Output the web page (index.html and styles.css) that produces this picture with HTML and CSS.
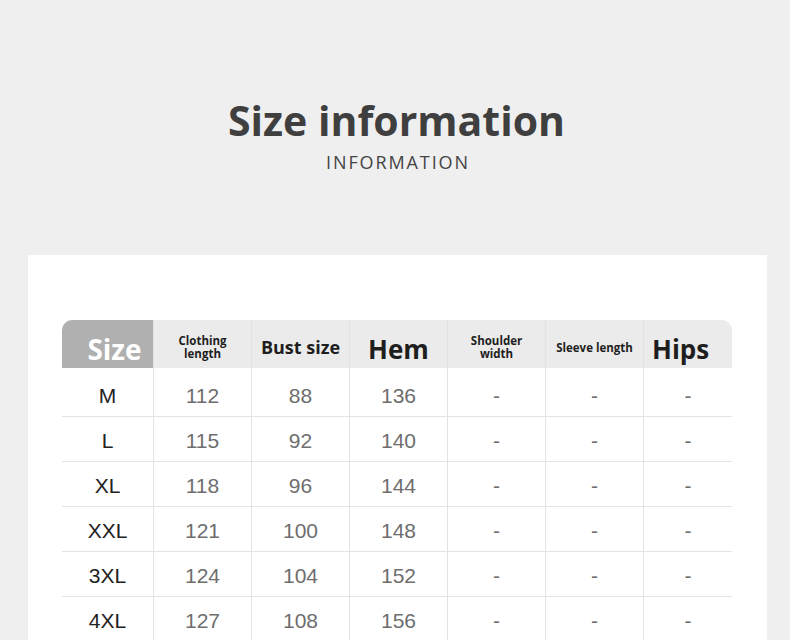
FILE: index.html
```html
<!DOCTYPE html>
<html>
<head>
<meta charset="utf-8">
<link rel="stylesheet" href="styles.css">
</head>
<body>
<div class="page">
  <header class="intro">
    <h1 class="title">Size information</h1>
    <p class="subtitle">INFORMATION</p>
  </header>
  <section class="card">
    <div class="table">
      <div class="row head">
        <div class="cell h-size">Size</div>
        <div class="cell h-small">Clothing<br>length</div>
        <div class="cell h-mid">Bust size</div>
        <div class="cell h-big">Hem</div>
        <div class="cell h-small">Shoulder<br>width</div>
        <div class="cell h-small">Sleeve length</div>
        <div class="cell h-big h-last">Hips</div>
      </div>
      <div class="row body first">
        <div class="cell lbl">M</div><div class="cell">112</div><div class="cell">88</div><div class="cell">136</div><div class="cell">-</div><div class="cell">-</div><div class="cell">-</div>
      </div>
      <div class="row body">
        <div class="cell lbl">L</div><div class="cell">115</div><div class="cell">92</div><div class="cell">140</div><div class="cell">-</div><div class="cell">-</div><div class="cell">-</div>
      </div>
      <div class="row body">
        <div class="cell lbl">XL</div><div class="cell">118</div><div class="cell">96</div><div class="cell">144</div><div class="cell">-</div><div class="cell">-</div><div class="cell">-</div>
      </div>
      <div class="row body">
        <div class="cell lbl">XXL</div><div class="cell">121</div><div class="cell">100</div><div class="cell">148</div><div class="cell">-</div><div class="cell">-</div><div class="cell">-</div>
      </div>
      <div class="row body">
        <div class="cell lbl">3XL</div><div class="cell">124</div><div class="cell">104</div><div class="cell">152</div><div class="cell">-</div><div class="cell">-</div><div class="cell">-</div>
      </div>
      <div class="row body">
        <div class="cell lbl">4XL</div><div class="cell">127</div><div class="cell">108</div><div class="cell">156</div><div class="cell">-</div><div class="cell">-</div><div class="cell">-</div>
      </div>
    </div>
  </section>
</div>
</body>
</html>
```

FILE: styles.css
```css
html, body {
  margin: 0;
  padding: 0;
  background: #efefef;
  height: 100%;
  overflow: hidden;
}
.page {
  display: flex;
  flex-direction: column;
  align-items: stretch;
  font-family: "Open Sans", "Liberation Sans", sans-serif;
}
.intro {
  display: flex;
  flex-direction: column;
  align-items: center;
  padding: 95px 0 0 3px;
}
.title {
  margin: 0;
  font-size: 41px;
  line-height: 50px;
  font-weight: 700;
  color: #3f3f3f;
  letter-spacing: 0;
}
.subtitle {
  margin: 5px 0 0 3px;
  font-size: 18px;
  line-height: 24px;
  color: #444;
  letter-spacing: 1.9px;
}
.card {
  margin: 81px 23px 0 28px;
  background: #fff;
  padding: 65px 35px 0 34px;
  height: 320px;
}
.table {
  display: flex;
  flex-direction: column;
  width: 670px;
}
.row {
  display: grid;
  grid-template-columns: 91px 98px 98px 98px 98px 98px 89px;
}
.cell {
  display: flex;
  align-items: center;
  justify-content: center;
  text-align: center;
  box-sizing: border-box;
}
.head {
  height: 48px;
}
.head .cell {
  background: #ebebeb;
  color: #1e1e1e;
  font-weight: 700;
  border-left: 1px solid #e2e2e2;
}
.head .h-size {
  background: #b0b0b0;
  color: #fff;
  font-size: 28px;
  border-top-left-radius: 10px;
  border-left: none;
  padding: 10px 0 0 14px;
}
.head .h-small {
  font-size: 11.5px;
  line-height: 13px;
  padding-top: 6px;
}
.head .h-mid {
  font-size: 18px;
  padding-top: 6px;
}
.head .h-big {
  font-size: 26px;
  padding-top: 9px;
}
.head .h-last {
  border-top-right-radius: 10px;
  justify-content: flex-start;
  padding-left: 8px;
}
.body {
  height: 45px;
}
.body.first {
  height: 49px;
}
.body .cell {
  font-family: "Liberation Sans", Arial, sans-serif;
  font-size: 21px;
  color: #6e6e6e;
  border-bottom: 1px solid #e3e3e3;
  border-left: 1px solid #e3e3e3;
  padding-top: 4px;
}
.body.first .cell {
  padding-top: 8px;
}
.body .cell:first-child {
  border-left: none;
}
.body .lbl {
  color: #222;
}
```
